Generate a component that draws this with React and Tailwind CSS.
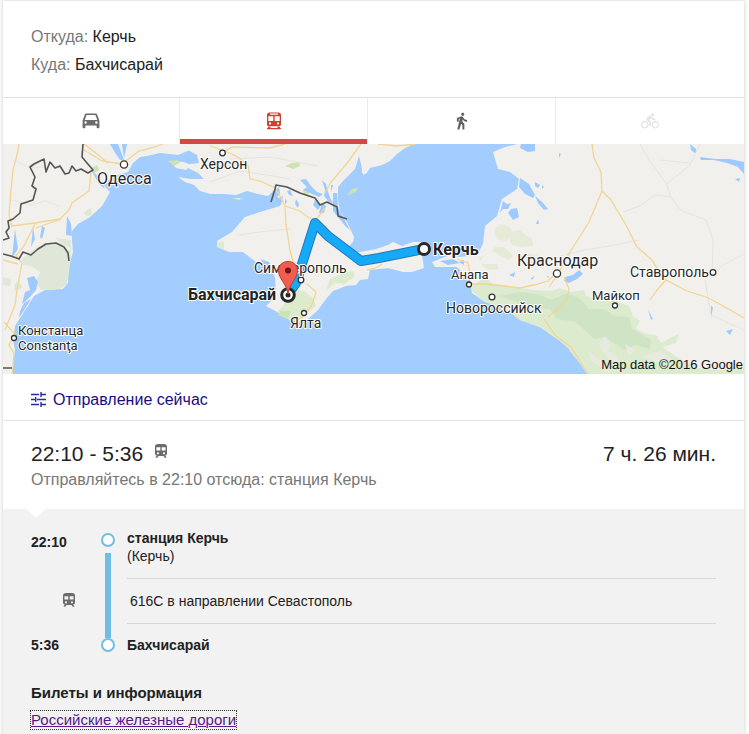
import React from "react";

function CarIcon() {
  return (
    <svg viewBox="0 0 18 16" className="h-4 w-[18px]" fill="#6b6b6b" aria-hidden="true">
      <path fillRule="evenodd" d="M4.500 0.500h9c.9 0 1.400.4 1.700 1.200L17.400 7.500V12.500H.6V7.500l2.200-5.800C3.100.9 3.600.5 4.500.5zM4.600 1.900L2.700 7h12.600L13.400 1.900zM3.600 8.300a1.200 1.200 0 100 2.400 1.200 1.200 0 000-2.400zM14.400 8.300a1.200 1.200 0 100 2.400 1.200 1.200 0 000-2.400z" />
      <path d="M.6 12h2.800v2.300c0 .6-.3.900-.9.900h-1c-.6 0-.9-.3-.9-.9zM14.600 12h2.800v2.300c0 .6-.3.900-.9.900h-1c-.6 0-.9-.3-.9-.9z" />
    </svg>
  );
}

function TransitIcon() {
  return (
    <svg viewBox="0 0 16 18" className="h-[18px] w-4" fill="#d23f31" aria-hidden="true">
      <path fillRule="evenodd" d="M3.500 .5h9C14 .5 15 1.500 15 3v9.500c0 1-.7 1.700-1.700 1.700H2.700c-1 0-1.700-.7-1.700-1.700V3C1 1.500 2 .5 3.500.5zM4 1.500v1.200h8V1.500zM2.300 4.200v4.800h5V4.200zM8.700 4.200v4.800h5V4.200zM4 10.300a1.100 1.100 0 100 2.200 1.100 1.100 0 000-2.200zM12 10.300a1.100 1.100 0 100 2.200 1.100 1.100 0 000-2.200z" />
      <path d="M2 14.800h2.500v1.100h7v-1.100H14v1.100h1.200l-.6 1.300H1.400L.8 15.900H2z" />
    </svg>
  );
}

function WalkIcon() {
  return (
    <svg viewBox="6 0.500 13 23" className="h-[18px] w-3" fill="#5f5f5f" aria-hidden="true">
      <path d="M13.500 5.500c1.100 0 2-.9 2-2s-.9-2-2-2-2 .9-2 2 .9 2 2 2zM9.800 8.900L6.500 23h2.600l2.300-7.500 1.600 1.500v6h2.500v-7.500l-2.600-2.500.6-3C14.800 12 16.800 13 19 13v-2.300c-1.900 0-3.500-.7-4.300-2.100l-1-1.600c-.4-.6-1-1-1.700-1-.3 0-.5.1-.8.1L6 8.300V13h2.300V9.600l1.500-.7" />
    </svg>
  );
}

function BikeIcon() {
  return (
    <svg viewBox="0 2 24 20" className="h-4 w-[18px]" fill="#e2e2e2" aria-hidden="true">
      <path d="M15.500 5.500c1.100 0 2-.9 2-2s-.9-2-2-2-2 .9-2 2 .9 2 2 2zM5 12c-2.800 0-5 2.200-5 5s2.200 5 5 5 5-2.200 5-5-2.200-5-5-5zm0 8.500c-1.900 0-3.500-1.600-3.500-3.500s1.600-3.500 3.500-3.500 3.500 1.600 3.500 3.500-1.600 3.500-3.500 3.500zm5.800-10l2.400-2.400.8.800c1.300 1.300 3 2.100 5.100 2.100V9c-1.500 0-2.700-.6-3.600-1.500l-1.900-1.900c-.5-.4-1-.6-1.600-.6s-1.100.2-1.400.6L7.800 8.400c-.4.400-.6.900-.6 1.400 0 .6.200 1.100.6 1.400L11 14v5h2v-6.200l-2.200-2.300zM19 12c-2.800 0-5 2.200-5 5s2.200 5 5 5 5-2.200 5-5-2.200-5-5-5zm0 8.500c-1.900 0-3.500-1.600-3.500-3.500s1.600-3.500 3.500-3.500 3.500 1.600 3.500 3.500-1.600 3.500-3.500 3.500z" />
    </svg>
  );
}

function TrainIcon() {
  return (
    <svg viewBox="0 0 12 14" className="h-3.5 w-3 shrink-0" fill="#6b6b6b" aria-hidden="true">
      <path fillRule="evenodd" d="M3.200 0h5.600C11 0 12 1.100 12 2.700v6.800c0 1.200-.8 2.100-2 2.100l1.300 1.500v.6H9.800L8.500 12h-5l-1.300 1.700H.7v-.6L2 11.600c-1.200 0-2-.9-2-2.100V2.700C0 1.100 1 0 3.200 0zM1.400 3.200v3.300h3.900V3.200zM6.700 3.200v3.300h3.900V3.200zM3 8.200a1.100 1.100 0 100 2.200 1.100 1.100 0 000-2.200zM9 8.200a1.100 1.100 0 100 2.200 1.100 1.100 0 000-2.200z" />
    </svg>
  );
}

function TuneIcon() {
  return (
    <svg viewBox="0 0 15 15" className="mb-0.5 h-[15px] w-[15px] shrink-0" fill="none" stroke="#2a2a9c" strokeWidth="1.400" aria-hidden="true">
      <path d="M0 2.500h8M10 2.500h5M10 0v5M0 7.500h4M6 7.500h9M4.700 5v5M0 12.500h8M10 12.500h5M10 10v5" />
    </svg>
  );
}

const cities = [
  { name: "Одесса", x: 97, y: 184, size: 16, dot: [124, 164.500, 3.600] },
  { name: "Херсон", x: 200, y: 169, size: 14, dot: [222.500, 153, 2.800] },
  { name: "Симферополь", x: 254, y: 273, size: 14, dot: [301, 280, 2.800] },
  { name: "Ялта", x: 290, y: 328, size: 14, dot: [304, 313, 2.500] },
  { name: "Констанца", x: 18, y: 335, size: 13, dot: [14, 338, 2.500] },
  { name: "Constanţa", x: 18, y: 350, size: 13 },
  { name: "Анапа", x: 451, y: 279, size: 13, dot: [469, 284.500, 2.500] },
  { name: "Новороссийск", x: 446, y: 313, size: 14, dot: [492, 297, 2.900] },
  { name: "Краснодар", x: 517, y: 266, size: 16, dot: [557, 273.500, 3.600] },
  { name: "Майкоп", x: 592, y: 300, size: 13, dot: [615, 305.500, 2.500] },
  { name: "Ставрополь", x: 630, y: 277, size: 14, dot: [713, 272.500, 2.800] },
];

function RouteMap() {
  return (
    <svg
      viewBox="3 144 741 230"
      preserveAspectRatio="xMidYMid slice"
      className="block h-[230px] w-full"
      role="img"
      aria-label="Керчь — Бахчисарай"
    >
      <defs>
        <clipPath id="eastLand">
          <path d="M493 152L498 169L510 172L519 179L517 189L502 199L497 216L485 226L483 244L477 255L460 257L450 255L432 262L435 267L457 267L460 270L470 280L472 293L485 302L507 310L520 320L540 327L560 341L567 347L579 362L588 375H750V140H534L505 147z" />
        </clipPath>
      </defs>
      <rect x="0" y="140" width="750" height="240" fill="#a3ccff" />

      <g fill="#f1f0ed">
        <path d="M0 140H190V150L178 155L160 153L147 156L140 157L133 163L128 172L115 176L103 183L106 188L110 192L105 201L102 206L90 217L85 220L78 224L72 231L72 240L73 252L69 266L68 283L63 289L45 290L34 296L24 312L15 326L13 340L15 350L12 375H0z" />
        <path d="M188 140H366L364 162L366 172L363 175L361 164L359 156L355 169L343 181L338 187L338 200L340 211L347 222L354 237L353 242L348 247L349 253L360 252L376 249L388 245L393 242L402 246L413 242L421 242L422 255L424 268L412 272L403 272L388 268L370 270L368 279L360 280L356 285L346 286L333 291L326 299L318 310L308 319L298 322L288 319L277 312L266 306L276 296L275 278L270 265L256 262L243 252L229 252L217 247L217 241L232 232L245 217L263 211L280 206L281 201L273 191L268 196L258 194L247 191L236 195L223 194L210 194L200 191L194 185L185 182L178 177L190 179L204 179L198 173L186 167L190 164L199 163L197 155L188 150z" />
        <path d="M362 140H422L405 148L397 154L390 161L382 165L370 168L366 174L362 173z" />
        <path d="M493 152L498 169L510 172L519 179L517 189L502 199L497 216L485 226L483 244L477 255L460 257L450 255L432 262L435 267L457 267L460 270L470 280L472 293L485 302L507 310L520 320L540 327L560 341L567 347L579 362L588 375H750V140H534L505 147z" />
        <path d="M170 161L184 162L191 165L186 170L176 168z" />
      </g>

      <g fill="#dfe7d8">
        <path d="M22 259L36 248L50 243L61 244L67 252L71 248L71 258L67 284L60 289L41 290L36 282L40 272L31 266L23 265z" />
        <path d="M3 277L11 279L10 286L3 285zM18 281L23 287L15 291L14 286zM56 238L71 240L71 248L61 244z" />
      </g>
      <g fill="#dcebcc">
        <path d="M283 306L297 289L305 292L313 298L316 306L306 314L297 322L287 319L277 312zM326 291L335 283L345 284L355 276L353 271L341 274L330 279zM217 243L224 241L224 249L218 248z" />
        <path d="M84 212L91 208L92 215L86 216zM232 198L243 198L239 200z" />
      </g>
      <g fill="#cbe4b2">
        <path d="M168 161L177 160L181 162L174 166zM91 168L97 165L99 170L94 173zM285 166L292 163L299 162L300 166L293 169zM348 194L352 189L358 188L356 192L348 195zM303 190L308 189L309 195L304 194zM280 311L291 311L288 319L278 315z" />
      </g>
      <g clipPath="url(#eastLand)">
        <path fill="#dcebce" d="M469 289L485 277L493 284L511 287L535 290L551 291L560 288L571 292L584 290L586 296L599 301L615 301L629 306L633 316L640 321L636 329L646 334L656 335L661 343L672 337L679 334L676 343L662 347L680 359L695 368L720 370L744 366V376H580z" />
        <path fill="#cfe4c5" d="M500 296L520 292L538 294L551 300L566 293L579 298L589 309L604 309L614 316L629 317L632 329L651 340L650 349L635 345L625 350L604 337L594 339L576 322L557 319L550 309L534 308z" />
        <path fill="#e8e9e1" d="M599 343L605 336L611 344L608 350L618 357L616 365L604 354zM641 357L661 351L675 362L657 362zM588 351L600 360L611 366L608 374L591 360zM625 344L635 350L629 357z" />
        <path fill="#e6ebd8" d="M495 228L502 224L511 228L512 233L506 242L499 240L494 234zM513 231L521 230L525 235L532 238L533 246L520 247L511 244L509 238zM495 247L504 247L513 256L509 260L501 256L492 251zM525 253L537 255L540 263L533 265L526 260zM477 257L484 256L480 261zM482 264L497 264L499 269L487 270z" />
      </g>

      <g fill="#9ecaff">
        <path d="M110 144L118 144L121 152L124 160L120 160L114 151zM122 144L127 144L124 158zM15 229L18 249L12 258zM33 227L35 239L31 247zM42 226L45 228L42 239L40 237zM67 216L71 224L72 236L66 235zM91 170L100 178L105 189L99 184zM27 278L34 276L38 282L36 290L29 298L22 304L25 292L30 290zM20 311L24 303L31 299L26 307L19 318z" />
        <path d="M275 190L279 187L280 194L275 199zM276 200L283 196L281 205zM287 191L290 190L293 196L289 195zM296 199L299 204L298 208L295 204zM285 198L287 202L285 204zM300 180L306 179L311 186L317 192L323 194L319 197L312 194L303 190L307 187zM322 180L326 184L328 192L331 200L335 203L329 202L324 196L325 190zM331 185L333 185L331 192zM333 193L337 193L338 207L342 215L350 230L346 227L338 217L333 211zM315 200L321 205L318 210L313 205zM322 203L326 206L324 213L319 213zM260 259L269 262L272 268L264 264z" />
        <path d="M520 178L529 184L535 195L533 198L525 194L519 187zM511 209L517 208L519 217L513 220L508 213zM535 196L542 202L548 209L544 210L538 203zM503 201L507 204L511 203L508 209L503 209L500 213zM521 144H535V151L528 152L520 148z" />
        <path d="M535 182L540 185L538 188L535 186zM542 185L544 187L542 189zM538 219L536 224L539 224M509 275L515 272L514 277zM531 278L535 276L532 280zM547 276L549 276L548 278z" />
        <path d="M565 277L573 275L579 270L583 274L577 279L569 283L564 281zM690 144L696 149L696 154L691 150zM700 157L716 159L730 159L744 162L744 174L738 167L727 163L714 160L701 160zM735 179L740 178L739 182zM726 331L733 329L730 335zM711 306L713 307L711 318zM648 310L653 319L651 320zM459 262L464 260L464 265zM440 261L453 259L460 263L448 265zM559 153L561 154L559 158z" />
      </g>

      <g fill="none" stroke="#e6e4de" strokeWidth="1">
        <path d="M12 200L30 205L45 201L60 206M13 160L30 168L45 167M210 182L240 171L267 175L290 179M230 159L270 157L318 166M238 235L268 231L290 229M640 144L649 160L666 183L671 197L680 210L706 220L713 240L712 276M667 184L690 165L700 144M671 197L655 195L640 206L623 212M549 259L580 251L620 244L638 240M660 160L690 163M705 280L711 315L744 330M744 254L725 264L712 275" />
      </g>
      <g fill="none" stroke="#f2d592" strokeWidth="1.300">
        <path d="M19 144L17 155L13 170L11 190L9 215L12 226L35 223L60 219L69 210L72 203L89 191L91 173M84 150L102 161L122 164L139 151L155 147L163 144M35 224L29 236L24 246L16 256L22 263L19 279L17 290L15 305L9 320L5 330M4 322L15 334L9 345L14 354L12 375M84 144L97 154L108 163M61 219L36 228M3 260L18 264" />
        <path d="M210 146L225 151L238 157L248 165L250 179L260 181L275 188L280 196L285 206L286 225L290 250L293 262L297 276M361 144L348 162L331 182L325 193M285 206L300 211L309 218L316 220L325 208M225 151L232 147L270 148L285 144M307 284L316 292L312 305L302 318L293 321M367 270L376 268L382 264M378 144L397 146L416 144" />
        <path d="M592 144L594 158L601 172L602 191L589 222L570 252L558 274L549 287M602 191L611 200L626 225L637 247L652 260L662 276L666 280L687 291L706 297L718 303L744 318M666 280L657 290L650 300M564 277L569 289L567 299L560 307L548 317M469 284L485 284L505 286L520 288L534 285L548 281L553 276M457 259L468 263L470 274L466 284M544 319L555 335L571 347L588 374" />
      </g>

      <g fill="none" stroke="#555555" strokeWidth="1.600" strokeLinejoin="round">
        <path d="M83 144L82 157L87 163L93 170L88 173L81 169L76 171L72 166L69 173L65 174L60 166L55 168L50 162L46 172L44 159L34 164L30 167L35 177L32 186L36 189L33 200L21 204L20 213L13 219L8 221L9 228L6 232L9 238L3 240M3 254L11 256L19 259L23 252L31 255L38 249L46 244L56 243L64 247L68 253L69 261M3 368L12 368" />
        <path d="M271 202L275 189L276 185L287 187L300 193L315 198L320 205L327 202L337 207L338 216L347 219" />
      </g>

      <path d="M288 294L296 283L315 223L328 236L361 261L379 258L424 249" fill="none" stroke="#2477b8" strokeWidth="10" strokeLinejoin="round" />
      <path d="M288 294L296 283L315 223L328 236L361 261L379 258L424 249" fill="none" stroke="#14aaf8" strokeWidth="8" strokeLinejoin="round" />

      {cities.map((city) => (
        <g key={city.name}>
          {city.dot && <circle cx={city.dot[0]} cy={city.dot[1]} r={city.dot[2]} fill="#fff" stroke="#333" strokeWidth="1.300" />}
          <text x={city.x} y={city.y} fontSize={city.size} fill="#272727" stroke="#fff" strokeWidth="2" strokeLinejoin="round" paintOrder="stroke" className="font-['Roboto','Noto_Sans',sans-serif]">
            {city.name}
          </text>
        </g>
      ))}

      <g fill="#fff" stroke="#292929" strokeWidth="3">
        <circle cx="424" cy="249" r="5.500" />
        <circle cx="288" cy="295" r="6.300" />
      </g>
      <circle cx="288" cy="295" r="2.500" fill="#292929" />
      <path d="M288 294C287 284 278.500 279 278.500 270.500C278.500 265 282.700 261.500 288 261.500S297.500 265 297.500 270.500C297.500 279 289 284 288 294z" fill="#f25c51" stroke="#b63f36" strokeWidth="1" />
      <circle cx="288" cy="270.500" r="3" fill="#6b1714" />
      <g fontWeight="700" fontSize="16" fill="#222" stroke="#fff" strokeWidth="2" strokeLinejoin="round" paintOrder="stroke" className="font-['Roboto','Noto_Sans',sans-serif]">
        <text x="188" y="300">Бахчисарай</text>
        <text x="433" y="255">Керчь</text>
      </g>
      <text x="743" y="369" textAnchor="end" fontSize="13" fill="#111" className="font-['Liberation_Sans',Arial,sans-serif]">
        Map data ©2016 Google
      </text>
    </svg>
  );
}

const modes = [
  { label: "На автомобиле", icon: <CarIcon /> },
  { label: "Общественный транспорт", icon: <TransitIcon />, active: true },
  { label: "Пешком", icon: <WalkIcon /> },
  { label: "На велосипеде", icon: <BikeIcon />, disabled: true },
];

function StopMarker() {
  return <span className="block size-3.5 shrink-0 rounded-full border-2 border-[#72bde3] bg-white" />;
}

export default function App() {
  return (
    <div className="h-screen overflow-hidden bg-[#fdfdfd] pt-px pr-[5px] pl-[3px] font-['Liberation_Sans',Arial,sans-serif] text-[#212121]">
      <main className="flex min-h-full flex-col bg-white shadow-[0_0_3px_1px_#dedede]">
        <header className="px-7 pt-[22px] pb-[18px] text-base leading-7">
          <p><span className="text-[#777]">Откуда:</span> Керчь</p>
          <p><span className="text-[#777]">Куда:</span> Бахчисарай</p>
        </header>

        <nav className="grid h-[47px] grid-cols-[177fr_188fr_188fr_188fr] divide-x divide-[#ebebeb] border-t border-[#e2e2e2]">
          {modes.map((mode) => (
            <button
              key={mode.label}
              type="button"
              aria-label={mode.label}
              aria-pressed={Boolean(mode.active)}
              disabled={mode.disabled}
              className="flex flex-col"
            >
              <span className="flex w-full grow items-center justify-center pt-1">{mode.icon}</span>
              <span className={mode.active ? "h-[5px] w-full bg-[#d14a3e]" : "h-[5px] w-full"} />
            </button>
          ))}
        </nav>

        <RouteMap />

        <button type="button" className="flex h-[47px] items-center gap-[7px] border-b border-[#e5e5e5] px-7 pt-1.5 text-left text-base leading-5 text-[#1a0d80]">
          <TuneIcon />
          Отправление сейчас
        </button>

        <section className="px-7 pt-[19px] pb-[18px]">
          <div className="flex items-center text-[21px] leading-7">
            <h2>22:10 - 5:36</h2>
            <span className="ml-3 pb-1.5"><TrainIcon /></span>
            <span className="ml-auto">7 ч. 26 мин.</span>
          </div>
          <p className="pt-px text-base leading-[22px] text-[#777]">Отправляйтесь в 22:10 отсюда: станция Керчь</p>
        </section>

        <section className="relative grow bg-[#f2f2f2] px-7 pt-5 text-sm">
          <svg viewBox="0 0 18 9" className="absolute top-0 left-6 h-[9px] w-[18px]" fill="#fff" aria-hidden="true">
            <path d="M0 0h18L9 9z" />
          </svg>
          <div className="grid grid-cols-[70px_14px_1fr]">
            <div className="flex flex-col justify-between font-bold">
              <span className="pt-1 leading-[18px]">22:10</span>
              <span className="pt-3 pl-8"><TrainIcon /></span>
              <span className="leading-[18px]">5:36</span>
            </div>
            <div className="flex flex-col items-center pt-1">
              <StopMarker />
              <span className="mt-1.5 w-1.5 grow bg-[#72bde3]" />
              <StopMarker />
              <span className="h-0.5" />
            </div>
            <div className="pl-3">
              <div className="pb-[13px] leading-[18px]">
                <p className="font-bold">станция Керчь</p>
                <p>(Керчь)</p>
              </div>
              <p className="border-y border-[#d8d8d8] px-[3px] py-[13px] leading-[18px]">616С в направлении Севастополь</p>
              <p className="pt-3 leading-[18px] font-bold">Бахчисарай</p>
            </div>
          </div>
          <h3 className="mt-[29px] text-[15px] leading-5 font-bold">Билеты и информация</h3>
          <a href="#tickets" className="mt-2 inline-block text-[15px] leading-[18px] text-[#551a8b] underline decoration-1 outline-1 outline-dotted outline-[#333]">
            Российские железные дороги
          </a>
        </section>
      </main>
    </div>
  );
}
